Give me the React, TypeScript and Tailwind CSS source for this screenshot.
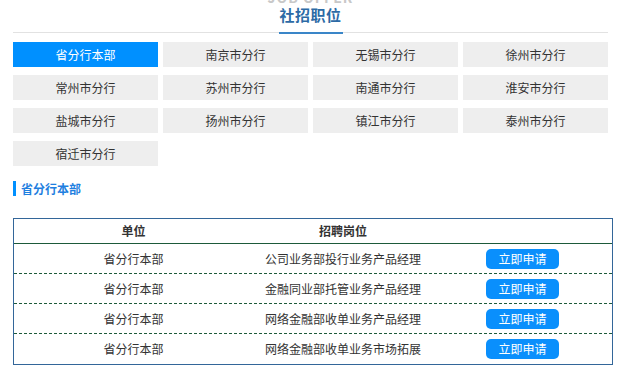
import React from 'react';

const branches = [
  '省分行本部', '南京市分行', '无锡市分行', '徐州市分行',
  '常州市分行', '苏州市分行', '南通市分行', '淮安市分行',
  '盐城市分行', '扬州市分行', '镇江市分行', '泰州市分行',
  '宿迁市分行',
];

const jobs = [
  '公司业务部投行业务产品经理',
  '金融同业部托管业务产品经理',
  '网络金融部收单业务产品经理',
  '网络金融部收单业务市场拓展',
];

const App: React.FC = () => {
  return (
    <div className="w-[639px] h-[378px] bg-white overflow-hidden text-[12px] text-[#333] font-['Microsoft_YaHei','Noto_Sans_CJK_SC',sans-serif]">
      <div className="ml-[13px] w-[600px]">
        {/* cut-off heading above */}
        <div className="h-[4px] overflow-hidden flex justify-center pr-[5px]">
          <div className="-mt-[10px] h-[14px] text-[14px] leading-[14px] font-bold text-[#c8c8c8] tracking-[1px]">JOB OFFER</div>
        </div>

        {/* title */}
        <div className="h-[22px] pt-[3px] flex justify-center pr-[5px]">
          <h2 className="text-[15px] leading-[16px] font-bold text-[#2c6aa5] tracking-[0.5px]">社招职位</h2>
        </div>
        <div className="h-[6px]" />
        <div className="w-[595px] h-[2px] border-t border-[#e2e2e2] flex justify-center">
          <div className="w-[64px] h-[2px] -mt-px bg-[#3a86c8]" />
        </div>

        {/* branch tabs */}
        <div className="flex flex-wrap mt-[8px]">
          {branches.map((b, i) => (
            <div
              key={b}
              className={`w-[145px] h-[25px] mr-[5px] mb-[8px] flex items-center justify-center ${
                i === 0 ? 'bg-[#0090ff] text-white' : 'bg-[#eeeeee] text-[#333]'
              }`}
            >
              {b}
            </div>
          ))}
        </div>

        {/* section label */}
        <div className="mt-[7px] flex items-center h-[15px]">
          <div className="w-[3px] h-[15px] bg-[#0090ff]" />
          <span className="ml-[5px] font-bold text-[#1f7fe0]">省分行本部</span>
        </div>

        {/* table */}
        <div className="mt-[22px] w-[600px] border border-[#336699]">
          <div className="flex h-[25px] items-center font-bold border-b border-[#1d5a3a]">
            <div className="w-[239px] text-center">单位</div>
            <div className="w-[180px] text-center">招聘岗位</div>
            <div className="flex-1" />
          </div>
          {jobs.map((j, i) => (
            <div
              key={j}
              className={`flex h-[30px] items-center ${i < jobs.length - 1 ? 'border-b border-dashed border-[#1d5a3a]' : 'h-[29px]'}`}
            >
              <div className="w-[239px] text-center">省分行本部</div>
              <div className="w-[180px] text-center">{j}</div>
              <div className="flex-1 flex justify-center">
                <button className="w-[73px] h-[20px] rounded-[5px] bg-[#0a8ffc] text-white text-[12px] leading-[20px]">立即申请</button>
              </div>
            </div>
          ))}
        </div>
      </div>
    </div>
  );
};

export default App;
